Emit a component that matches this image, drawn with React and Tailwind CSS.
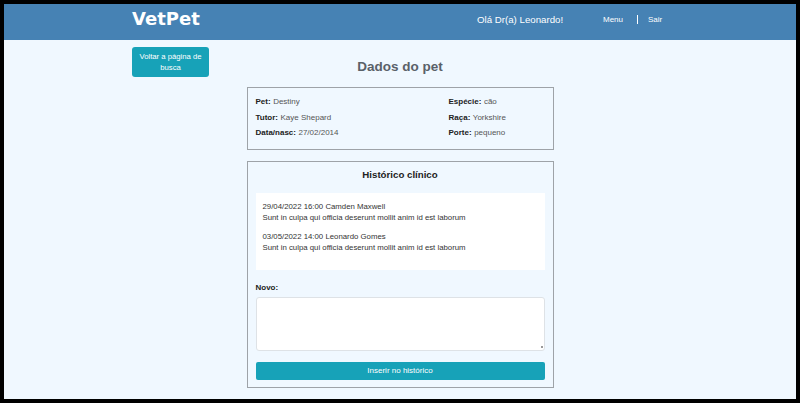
import { useState } from "react";

const pet = {
  left: [
    ["Pet:", "Destiny"],
    ["Tutor:", "Kaye Shepard"],
    ["Data/nasc:", "27/02/2014"],
  ],
  right: [
    ["Espécie:", "cão"],
    ["Raça:", "Yorkshire"],
    ["Porte:", "pequeno"],
  ],
};

const historico = [
  {
    quando: "29/04/2022 16:00",
    quem: "Camden Maxwell",
    texto: "Sunt in culpa qui officia deserunt mollit anim id est laborum",
  },
  {
    quando: "03/05/2022 14:00",
    quem: "Leonardo Gomes",
    texto: "Sunt in culpa qui officia deserunt mollit anim id est laborum",
  },
];

function Campo({ label, valor }) {
  return (
    <div className="leading-[15.5px] text-[8px]">
      <span className="font-bold text-[#222]">{label}</span>
      <span className="ml-[2.5px] text-[#555]">{valor}</span>
    </div>
  );
}

export default function App() {
  const [novo, setNovo] = useState("");

  return (
    <div className="w-[800px] h-[403px] bg-black pt-[4px] pl-[4px]">
      <div className="w-[792px] h-[395px] bg-[#f0f8ff] flex flex-col overflow-hidden font-['Liberation_Sans',Arial,sans-serif]">
        {/* topo */}
        <header className="h-[36px] shrink-0 bg-[#4682b4] text-white">
          <div className="w-[536px] mx-auto flex items-start h-full">
            <span className="w-[345px] mt-[4px] text-[18px] leading-[21px] font-bold font-['DejaVu_Sans',Verdana,sans-serif]">
              VetPet
            </span>
            <span className="w-[126px] mt-[10px] text-[9.7px] leading-[12px]">Olá Dr(a) Leonardo!</span>
            <span className="w-[34px] mt-[11px] text-[8px] leading-[10px]">Menu</span>
            <span className="w-px h-[9px] mt-[11px] bg-white"></span>
            <span className="ml-[10px] mt-[11px] text-[8px] leading-[10px]">Sair</span>
          </div>
        </header>

        <main className="w-[536px] mx-auto">
          <div className="grid grid-cols-[1fr_auto_1fr] items-start mt-[7px]">
            <button className="w-[77px] h-[30px] bg-[#17a2b8] text-white text-[7.7px] leading-[11px] rounded-[3px] flex items-center justify-center text-center px-[4px]">
              Voltar a página de busca
            </button>
            <h1 className="mt-[12px] text-[13.5px] leading-[16px] font-bold text-[#5a6169]">Dados do pet</h1>
            <div></div>
          </div>

          {/* dados */}
          <section className="mt-[10px] mx-auto w-[307px] border border-[#9ea3a8] pl-[8px] pt-[6px] pb-[8px] grid grid-cols-[193px_1fr]">
            <div>
              {pet.left.map(([l, v]) => (
                <Campo key={l} label={l} valor={v} />
              ))}
            </div>
            <div>
              {pet.right.map(([l, v]) => (
                <Campo key={l} label={l} valor={v} />
              ))}
            </div>
          </section>

          {/* historico */}
          <section className="mt-[11px] mx-auto w-[307px] border border-[#9ea3a8] px-[8px] pt-[7px] pb-[7px]">
            <h2 className="text-center text-[9.7px] leading-[12px] font-bold text-[#222]">Histórico clínico</h2>
            <div className="mt-[12px] bg-white pl-[7px] pt-[8.5px] pb-[8.5px] h-[77px] text-[7.8px] leading-[11px] text-[#333]">
              {historico.map((h, i) => (
                <div key={i} className="mb-[8px]">
                  <div>
                    {h.quando} {h.quem}
                  </div>
                  <div>{h.texto}</div>
                </div>
              ))}
            </div>

            <label className="block mt-[12.5px] text-[8px] leading-[11px] font-bold text-[#222]">Novo:</label>
            <div className="relative mt-[3.5px]">
              <textarea
                value={novo}
                onChange={(e) => setNovo(e.target.value)}
                className="block w-full h-[54px] bg-white border border-[#dee2e6] rounded-[3px] text-[8px] outline-none resize-none"
              ></textarea>
              <span className="absolute right-[2px] bottom-[3px] w-[2px] h-[2px] bg-[#999]"></span>
            </div>
            <button className="block mt-[11px] w-full h-[18px] bg-[#17a2b8] text-white text-[8px] rounded-[2px]">
              Inserir no histórico
            </button>
          </section>
        </main>
      </div>
    </div>
  );
}
